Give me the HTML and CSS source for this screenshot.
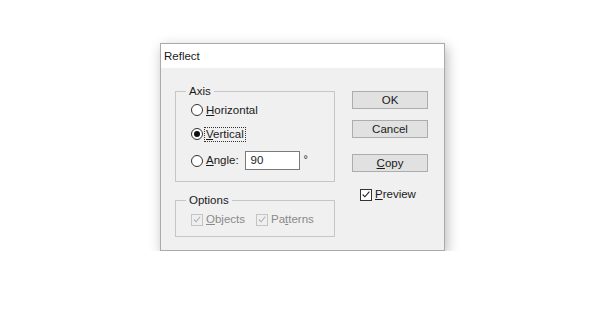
FILE: index.html
```html
<!DOCTYPE html>
<html>
<head>
<meta charset="utf-8">
<link rel="stylesheet" href="styles.css">
</head>
<body>
<div class="page">
  <div class="dialog">
    <div class="titlebar">Reflect</div>
    <div class="content">
      <div class="left">
        <div class="group axis">
          <div class="legend">Axis</div>
          <div class="row r1">
            <span class="radio"></span>
            <span class="label"><u>H</u>orizontal</span>
          </div>
          <div class="row r2">
            <span class="radio checked"><span class="dot"></span></span>
            <span class="label focus"><u>V</u>ertical</span>
          </div>
          <div class="row r3">
            <span class="radio"></span>
            <span class="label"><u>A</u>ngle:</span>
            <span class="input">90</span>
            <span class="deg">°</span>
          </div>
        </div>
        <div class="group options">
          <div class="legend">Options</div>
          <div class="row chk-row">
            <span class="check disabled"><svg width="11" height="11" viewBox="0 0 11 11"><polyline points="2,5.5 4.5,8 9,2.5" fill="none" stroke="#b0b0b0" stroke-width="1.2"/></svg></span>
            <span class="label dis"><u>O</u>bjects</span>
            <span class="check disabled second"><svg width="11" height="11" viewBox="0 0 11 11"><polyline points="2,5.5 4.5,8 9,2.5" fill="none" stroke="#b0b0b0" stroke-width="1.2"/></svg></span>
            <span class="label dis">Pa<u>t</u>terns</span>
          </div>
        </div>
      </div>
      <div class="right">
        <div class="btn">OK</div>
        <div class="btn cancel">Cancel</div>
        <div class="btn copy"><u>C</u>opy</div>
        <div class="preview">
          <span class="check"><svg width="11" height="11" viewBox="0 0 11 11"><polyline points="1.8,5.5 4.3,8 9.2,2.3" fill="none" stroke="#222" stroke-width="1.2"/></svg></span>
          <span class="label"><u>P</u>review</span>
        </div>
      </div>
    </div>
  </div>
</div>
</body>
</html>
```

FILE: styles.css
```css
html, body {
  margin: 0;
  padding: 0;
  background: #ffffff;
}
body {
  font-family: "Liberation Sans", Arial, sans-serif;
  font-size: 11px;
  color: #1a1a1a;
}
.page {
  padding: 43px 0 0 160px;
}
.dialog {
  width: 285px;
  height: 208px;
  box-sizing: border-box;
  border: 1px solid #aaaaaa;
  background: #f0f0f0;
  box-shadow: 2px 4px 12px rgba(0,0,0,0.28);
}
.titlebar {
  height: 24px;
  line-height: 25px;
  background: #ffffff;
  padding-left: 3px;
  font-size: 11.5px;
}
.content {
  display: flex;
  padding: 16px 0 0 14px;
}
.left {
  width: 160px;
}
.group {
  box-sizing: border-box;
  border: 1px solid #c6c6c6;
  margin-top: 7px;
}
.legend {
  margin: -7px 0 0 10px;
  padding: 0 3px;
  width: max-content;
  height: 13px;
  line-height: 13px;
  background: #f0f0f0;
  font-size: 11.5px;
}
.axis {
  height: 91px;
}
.options {
  height: 37px;
  margin-top: 18px;
}
.row {
  display: flex;
  align-items: center;
  padding-left: 15px;
}
.r1 { height: 18px; margin-top: 3px; }
.r2 { height: 18px; margin-top: 6px; }
.r3 { height: 19px; margin-top: 8px; }
.chk-row { height: 13px; margin-top: 6px; padding-left: 15px; }
.radio {
  width: 12px;
  height: 12px;
  box-sizing: border-box;
  border: 1px solid #333;
  border-radius: 50%;
  background: #fff;
  display: flex;
  align-items: center;
  justify-content: center;
  flex: none;
}
.dot {
  width: 6px;
  height: 6px;
  border-radius: 50%;
  background: #111;
}
.label {
  margin-left: 3px;
  line-height: 13px;
  font-size: 11.5px;
}
.focus {
  outline: 1px dotted #333;
  outline-offset: 0px;
  padding: 0 1px;
  margin-left: 2px;
}
.input {
  margin-left: 6px;
  width: 55px;
  height: 19px;
  box-sizing: border-box;
  border: 1px solid #7a7a7a;
  background: #fff;
  padding-left: 5px;
  line-height: 17px;
  font-size: 11.5px;
}
.deg {
  margin-left: 4px;
  align-self: flex-start;
  line-height: 16px;
  color: #1a1a1a;
}
.check {
  width: 12px;
  height: 12px;
  box-sizing: border-box;
  border: 1px solid #333;
  background: #fff;
  display: flex;
  align-items: center;
  justify-content: center;
  flex: none;
}
.check.disabled {
  border-color: #c4c4c4;
  background: #efefef;
}
.check.second {
  margin-left: 11px;
}
.dis {
  color: #8a8a8a;
  margin-left: 3px;
}
.right {
  margin-left: 17px;
  padding-top: 7px;
  width: 76px;
}
.btn {
  height: 18px;
  box-sizing: border-box;
  border: 1px solid #adadad;
  background: #e1e1e1;
  text-align: center;
  line-height: 16px;
  font-size: 11.5px;
}
.cancel { margin-top: 11px; }
.copy { margin-top: 16px; }
.preview {
  display: flex;
  align-items: center;
  margin: 16px 0 0 8px;
}
.preview .label {
  margin-left: 3px;
}
```
